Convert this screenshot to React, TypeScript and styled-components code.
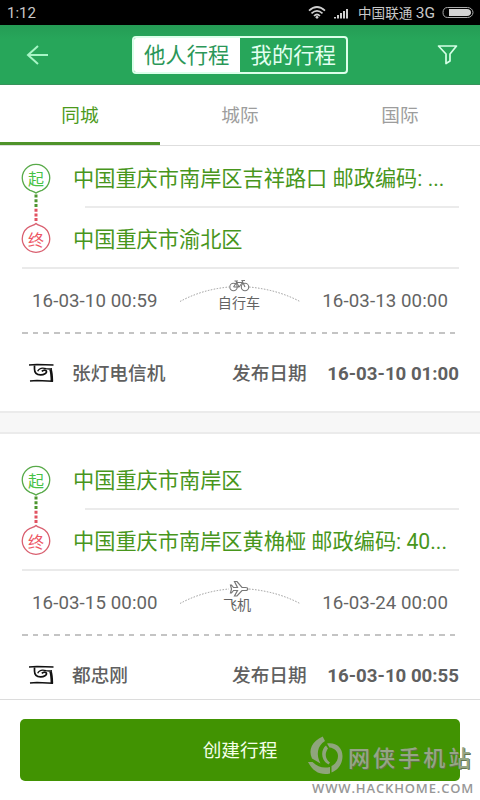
import React from "react";
import styled, { createGlobalStyle } from "styled-components";

const GlobalStyle = createGlobalStyle`
  * { box-sizing: border-box; }
  body { margin: 0; background: #fff; }
`;

const Screen = styled.div`
  position: relative;
  width: 480px;
  height: 800px;
  overflow: hidden;
  display: flex;
  flex-direction: column;
  background: #fff;
  font-family: Roboto, "Noto Sans CJK SC", sans-serif;
  color: #666;
`;

const StatusBar = styled.div`
  height: 25px;
  flex: none;
  display: flex;
  align-items: center;
  padding: 0 5px 0 7px;
  background: #000;
  color: #c8c8c8;
  font-size: 15px;
  line-height: 25px;
`;

const Clock = styled.span`
  flex: 1;
  padding-top: 2px;
`;

const Carrier = styled.span`
  margin: 0 7px 0 7px;
  padding-top: 1px;
  font-size: 13.6px;
  b { font-weight: 400; font-size: 15.5px; }
`;

const Header = styled.header`
  height: 60px;
  flex: none;
  display: flex;
  align-items: center;
  justify-content: space-between;
  padding: 0 22px 0 26px;
  background: linear-gradient(#259c55, #27a65a 14px);
  border-bottom: 1px solid #38925c;
`;

const Segments = styled.div`
  display: flex;
  width: 216px;
  height: 38px;
  margin-left: -6px;
  border: 2px solid #dcffea;
  border-radius: 4px;
  overflow: hidden;
`;

const Segment = styled.div<{ $active?: boolean }>`
  flex: 1;
  padding-left: ${(p) => (p.$active ? "0" : "1px")};
  text-align: center;
  font-size: 21.33px;
  line-height: 35px;
  background: ${(p) => (p.$active ? "#fff" : "transparent")};
  color: ${(p) => (p.$active ? "#2b9758" : "#e2fff0")};
`;

const Tabs = styled.nav`
  flex: none;
  display: flex;
  height: 61px;
  border-bottom: 1px solid #dedede;
`;

const Tab = styled.div<{ $active?: boolean }>`
  width: 160px;
  height: 60px;
  text-align: center;
  font-size: 18.67px;
  line-height: 62px;
  color: ${(p) => (p.$active ? "#4c9a1c" : "#9d9d9d")};
  border-bottom: ${(p) => (p.$active ? "3px solid #4f932a" : "0")};
`;

const TripList = styled.main`
  flex: 1;
  min-height: 0;
  overflow: hidden;
`;

const Card = styled.section<{ $spaced?: boolean }>`
  padding: ${(p) => (p.$spaced ? "14px" : "0")} 21px 0 22px;
`;

const Divider = styled.div`
  height: 23px;
  background: #f7f7f7;
  border-top: 2px solid #ebebeb;
  border-bottom: 2px solid #ebebeb;
`;

const Route = styled.div`
  display: flex;
  height: 123px;
  border-bottom: 2px solid #eaeaea;
`;

const RouteMarks = styled.svg`
  flex: none;
  width: 30px;
  height: 92px;
  margin: 16px 0 0 -1px;
  overflow: visible;
`;

const MarkText = styled.text`
  font-family: "Noto Sans CJK SC", sans-serif;
  font-size: 16px;
  text-anchor: middle;
`;

const Places = styled.div`
  flex: 1;
  margin-left: 22px;
`;

const Place = styled.div`
  height: 61px;
  font-size: 21.2px;
  line-height: 65px;
  white-space: nowrap;
  color: #48961c;
`;

const PlaceRule = styled.div`
  height: 2px;
  margin: -1px 0 -1px 12px;
  background: #ebebeb;
`;

const Times = styled.div`
  display: flex;
  align-items: flex-start;
  justify-content: space-between;
  height: 63px;
  padding: 0 11px 0 10px;
  font-size: 18.67px;
  line-height: 65px;
  letter-spacing: 0.1px;
  color: #646464;
`;

const Transport = styled.div`
  width: 122px;
  height: 50px;
  display: flex;
  flex-direction: column;
  align-items: center;
  font-size: 14.1px;
  line-height: 18px;
  letter-spacing: 0;
`;

const TransportLabel = styled.span<{ $shift: number }>`
  padding-right: ${(p) => p.$shift}px;
`;

const Arc = styled.svg`
  width: 122px;
  height: 25px;
  flex: none;
  margin: 9px 0 -9px;
`;

const Dashes = styled.div`
  height: 2px;
  margin-right: 4px;
  background: repeating-linear-gradient(90deg, #c4c4c4 0 5.5px, transparent 5.5px 10.7px);
`;

const Publisher = styled.div`
  display: flex;
  align-items: center;
  height: 77px;
  padding-top: 2px;
  font-size: 18.67px;
  font-weight: 500;
  line-height: 22px;
  white-space: nowrap;
  color: #606060;
`;

const Avatar = styled.svg`
  flex: none;
  width: 26px;
  height: 20px;
  margin: 0 17px 2px 7px;
`;

const Name = styled.span`
  width: 160px;
`;

const PublishedAt = styled.span`
  flex: 1;
  text-align: right;
  font-weight: 700;
`;

const Footer = styled.footer`
  flex: none;
  height: 101px;
  padding: 19px 20px;
  border-top: 1px solid #dcdcdc;
  background: #fff;
`;

const CreateButton = styled.div`
  height: 62px;
  border-radius: 5px;
  background: #419302;
  color: #f4ffe8;
  font-size: 18.67px;
  line-height: 65px;
  text-align: center;
`;

const Watermark = styled.div`
  position: absolute;
  left: 306px;
  top: 734px;
  width: 174px;
  height: 66px;
`;

const WatermarkTop = styled.div`
  display: flex;
  height: 45px;
`;

const WatermarkLogo = styled.svg`
  width: 40px;
  height: 42px;
`;

const WatermarkName = styled.span`
  margin-left: 2px;
  font-family: "Noto Sans CJK SC", sans-serif;
  font-size: 22px;
  font-weight: 500;
  line-height: 44px;
  letter-spacing: 3.1px;
  white-space: nowrap;
  color: #96a585;
  text-shadow: 1px 1px 0 #63754f;
`;

const WatermarkUrl = styled.div`
  margin-left: 6px;
  font-family: "Open Sans", sans-serif;
  font-size: 13px;
  font-weight: 600;
  line-height: 18px;
  letter-spacing: 0.85px;
  white-space: nowrap;
  color: #989898;
`;

const StatusIcons = () => (
  <svg width="43" height="15" viewBox="0 0 43 15" fill="none" stroke="#cfcfcf">
    <path d="M1 5.6Q9 -1.6 17 5.6M3.5 8.4Q9 3.2 14.5 8.4M6 11Q9 8 12 11" strokeWidth="1.7" />
    <circle cx="9" cy="12.3" r="1.4" fill="#cfcfcf" stroke="none" />
    <path d="M27 13.5v-1.5M30 13.5v-3.5M33 13.5v-5.500M36 13.500v-7.500M39 13.500v-9.500" strokeWidth="2" />
  </svg>
);

const Battery = () => (
  <svg width="33" height="13" viewBox="0 0 33 13">
    <path d="M5.5 1.500h20c3 0 5.500 2.200 5.500 5s-2.500 5-5.500 5h-20C2.500 11.500 1 9.300 1 6.500s1.500-5 4.500-5z" fill="none" stroke="#aaa" />
    <path d="M7 3h18c2.500 0 4 1.500 4 3.500S27.500 10 25 10H7z" fill="#d4d4d4" />
  </svg>
);

const BackIcon = () => (
  <svg width="23" height="22" viewBox="0 0 23 22" fill="none" stroke="#a7f5c6" strokeWidth="2">
    <path d="M22 11H2M12 2L2 11l10 9" />
  </svg>
);

const FilterIcon = () => (
  <svg width="21" height="20" viewBox="0 0 21 20" fill="none" stroke="#d4ffe6" strokeWidth="1.7" strokeLinejoin="round">
    <path d="M1.500 1h18l-6.500 8v7l-4 2.500V9z" />
  </svg>
);

const StartEnd = () => (
  <RouteMarks viewBox="0 0 30 92">
    <g fill="none" strokeWidth="1.3">
      <path d="M15 31C13.500 29.500 11.500 29.300 9 28.300A13.700 13.700 0 1 1 21 28.300C18.500 29.300 16.500 29.500 15 31z" stroke="#58aa49" />
      <path d="M15 61.500C13.500 63 11.500 63.300 9 64.300A13.700 13.700 0 1 0 21 64.300C18.500 63.300 16.500 63 15 61.500z" stroke="#d96070" />
      <path d="M15 32.500v12.500" stroke="#4d952f" strokeWidth="3" strokeDasharray="3 1.700" />
      <path d="M15 46.700v14" stroke="#e15261" strokeWidth="3" strokeDasharray="3 1.700" />
    </g>
    <MarkText x="15" y="22.500" fill="#47c246">起</MarkText>
    <MarkText x="15" y="83.500" fill="#ed5361">终</MarkText>
  </RouteMarks>
);

const TransportArc = ({ kind }: { kind: "bike" | "plane" }) => (
  <Arc viewBox="0 0 122 25" fill="none" stroke="#777">
    <path d="M1 23.500Q23 11.500 50 9M70 9Q98 11.500 121 23.500" strokeDasharray="1.500 1.500" stroke="#999" />
    {kind === "bike" ? (
      <g strokeWidth="1.100">
        <circle cx="54.500" cy="9" r="3.700" />
        <circle cx="66" cy="9" r="3.700" />
        <path d="M54.500 9l3-4.500h6l-3.500 4.500H54.500M60 9L57 3M55.500 3H59M66 9l-3-6.500h3" />
      </g>
    ) : (
      <path
        d="M52.500 5l2 2.500h4L55.500 1.500H58l5 6h3.500c1.500 0 2.300.700 2.300 1.500s-.8 1.500-2.300 1.500H63l-5 5.500h-2.500l3-5.500h-4l-2 2.500h-1l1-4-1-4z"
        strokeWidth="1.200"
      />
    )}
  </Arc>
);

const SealAvatar = () => (
  <Avatar viewBox="0 0 26 20" fill="none" stroke="#111">
    <path d="M0 1.900L8 1.400 24.500 1.900" strokeWidth="1.500" />
    <path d="M5.500 2.500v3.500c0 3.500 2 5.800 6 5.900 3.500.1 6.500-1.700 6-3.700-.5-1.500-3-1.400-4.700.2" strokeWidth="1.700" />
    <path d="M8.700 8.300C10 5.500 13.500 4.600 17 5.600c2 .5 4 .5 6 .2" strokeWidth="1.400" />
    <path d="M21.500 6.500c1.200 3 1.300 7 1.400 12" strokeWidth="2.600" />
    <path d="M1 18.100l7-.7 16 .8" strokeWidth="1.500" />
  </Avatar>
);

interface Trip {
  from: string;
  to: string;
  depart: string;
  arrive: string;
  kind: "bike" | "plane";
  transport: string;
  name: string;
  published: string;
}

const trips: Trip[] = [
  {
    from: "中国重庆市南岸区吉祥路口 邮政编码: ...",
    to: "中国重庆市渝北区",
    depart: "16-03-10 00:59",
    arrive: "16-03-13 00:00",
    kind: "bike",
    transport: "自行车",
    name: "张灯电信机",
    published: "16-03-10 01:00",
  },
  {
    from: "中国重庆市南岸区",
    to: "中国重庆市南岸区黄桷桠 邮政编码: 40...",
    depart: "16-03-15 00:00",
    arrive: "16-03-24 00:00",
    kind: "plane",
    transport: "飞机",
    name: "都忠刚",
    published: "16-03-10 00:55",
  },
];

const TripCard = ({ trip, spaced }: { trip: Trip; spaced?: boolean }) => (
  <Card $spaced={spaced}>
    <Route>
      <StartEnd />
      <Places>
        <Place>{trip.from}</Place>
        <PlaceRule />
        <Place>{trip.to}</Place>
      </Places>
    </Route>
    <Times>
      <span>{trip.depart}</span>
      <Transport>
        <TransportArc kind={trip.kind} />
        <TransportLabel $shift={trip.kind === "plane" ? 6 : 2}>{trip.transport}</TransportLabel>
      </Transport>
      <span>{trip.arrive}</span>
    </Times>
    <Dashes />
    <Publisher>
      <SealAvatar />
      <Name>{trip.name}</Name>
      <span>发布日期</span>
      <PublishedAt>{trip.published}</PublishedAt>
    </Publisher>
  </Card>
);

export default function App() {
  return (
    <>
      <GlobalStyle />
      <Screen>
        <StatusBar>
          <Clock>1:12</Clock>
          <StatusIcons />
          <Carrier>
            中国联通 <b>3G</b>
          </Carrier>
          <Battery />
        </StatusBar>
        <Header>
          <BackIcon />
          <Segments>
            <Segment $active>他人行程</Segment>
            <Segment>我的行程</Segment>
          </Segments>
          <FilterIcon />
        </Header>
        <Tabs>
          <Tab $active>同城</Tab>
          <Tab>城际</Tab>
          <Tab>国际</Tab>
        </Tabs>
        <TripList>
          <TripCard trip={trips[0]} />
          <Divider />
          <TripCard trip={trips[1]} spaced />
        </TripList>
        <Footer>
          <CreateButton>创建行程</CreateButton>
        </Footer>
        <Watermark>
          <WatermarkTop>
            <WatermarkLogo viewBox="0 0 40 42" fill="#8fa57c">
              <path d="M16.700 2.500C6 7 2 16 6 24.500L14.500 29.500C10 21 11 12 19 7z" />
              <path d="M2 28c5 10 13 13.500 22 11.500V33c-7 1.500-12 0-17.500-5z" />
              <path d="M21 9.500C30 8 36.500 13.500 36.500 22c0 8-4.500 14-11 16.500V32c4-2 6.500-5.500 6.500-10 0-4.500-3.500-8-8.500-8.500z" />
              <path d="M20 11.500c-5.500 4-5.500 15 2.500 19l1.500-2c-5-3.500-5.500-9-2-14z" />
            </WatermarkLogo>
            <WatermarkName>网侠手机站</WatermarkName>
          </WatermarkTop>
          <WatermarkUrl>WWW.HACKHOME.COM</WatermarkUrl>
        </Watermark>
      </Screen>
    </>
  );
}
